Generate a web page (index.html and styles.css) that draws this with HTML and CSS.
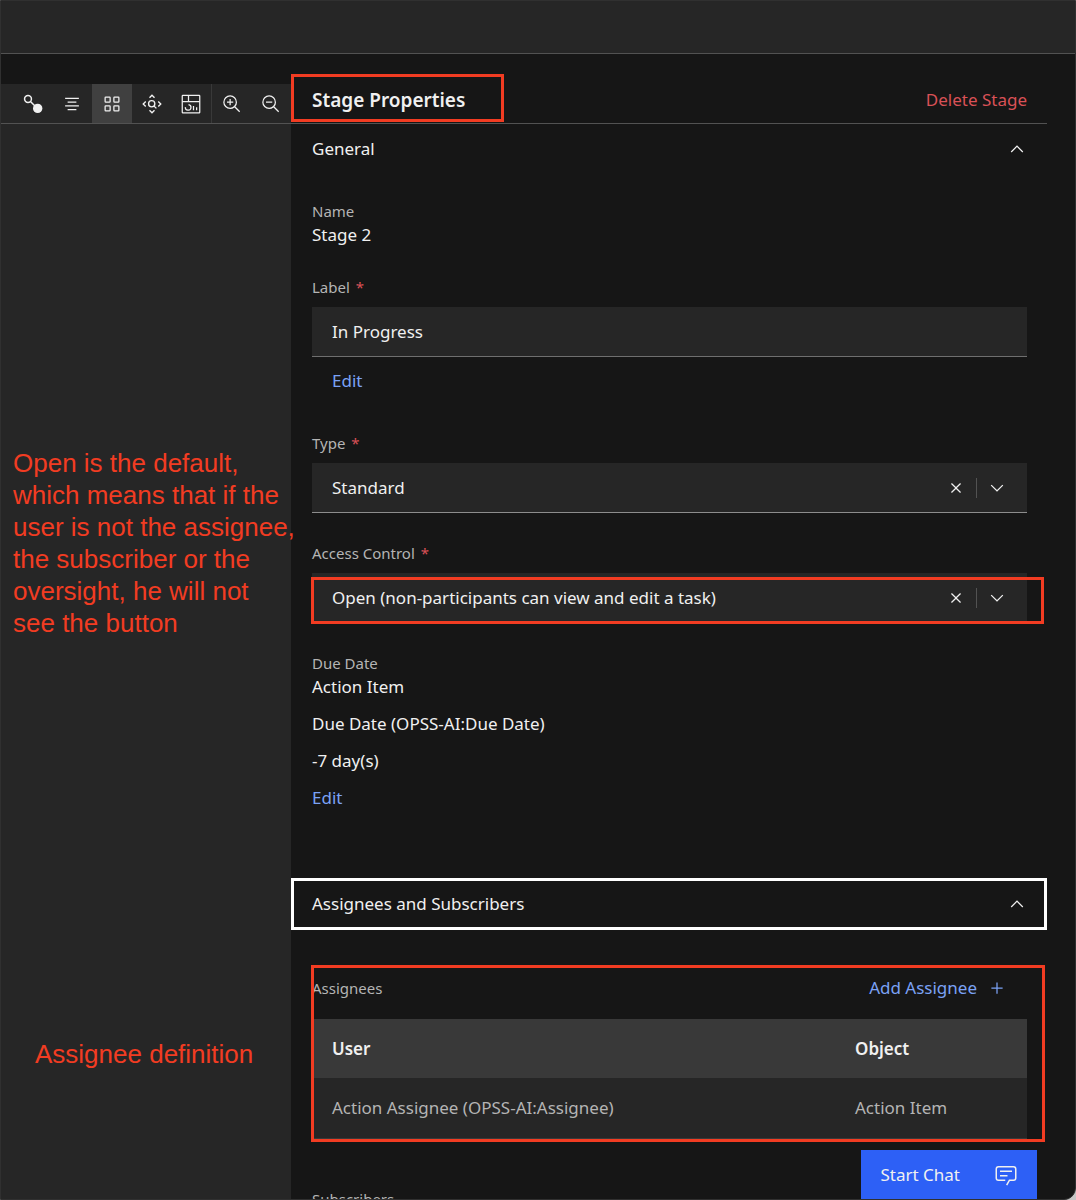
FILE: index.html
```
<!DOCTYPE html>
<html lang="en">
<head>
    <meta charset="UTF-8">
    <meta name="viewport" content="width=device-width, initial-scale=1.0">
    <title>Stage Properties</title>
    <link rel="stylesheet" href="styles.css">
</head>
<body>
    <div class="app">
        <header class="top-bar"></header>
        <div class="content">
            <aside class="canvas">
                <div class="toolbar">
                    <button type="button" class="tool" aria-label="Connect">
                        <svg class="icon" viewBox="0 0 32 32"><circle cx="8" cy="8" r="5.500" fill="none" stroke="currentColor" stroke-width="2.400"/><path d="M12 12l8 8" stroke="currentColor" stroke-width="2.400"/><circle cx="23.500" cy="23" r="7.500"/></svg>
                    </button>
                    <button type="button" class="tool" aria-label="Align">
                        <svg class="icon" viewBox="0 0 32 32"><path d="M5 6h22v2H5zM9 12h14v2H9zM5 18h22v2H5zM9 24h14v2H9z"/></svg>
                    </button>
                    <button type="button" class="tool active" aria-label="Grid">
                        <svg class="icon" viewBox="0 0 32 32"><path d="M12 4H6a2 2 0 0 0-2 2v6a2 2 0 0 0 2 2h6a2 2 0 0 0 2-2V6a2 2 0 0 0-2-2zm0 8H6V6h6zM26 4h-6a2 2 0 0 0-2 2v6a2 2 0 0 0 2 2h6a2 2 0 0 0 2-2V6a2 2 0 0 0-2-2zm0 8h-6V6h6zM12 18H6a2 2 0 0 0-2 2v6a2 2 0 0 0 2 2h6a2 2 0 0 0 2-2v-6a2 2 0 0 0-2-2zm0 8H6v-6h6zM26 18h-6a2 2 0 0 0-2 2v6a2 2 0 0 0 2 2h6a2 2 0 0 0 2-2v-6a2 2 0 0 0-2-2zm0 8h-6v-6h6z"/></svg>
                    </button>
                    <button type="button" class="tool" aria-label="Fit to screen">
                        <svg class="icon" viewBox="0 0 32 32"><g fill="none" stroke="currentColor" stroke-width="2.200"><path d="M12 6l4-4 4 4M12 26l4 4 4-4M6 12l-4 4 4 4M26 12l4 4-4 4"/><circle cx="15.500" cy="15.500" r="5"/><path d="M19 19l4 4"/></g></svg>
                    </button>
                    <button type="button" class="tool" aria-label="Dashboard">
                        <svg class="icon" viewBox="0 0 32 32"><g fill="none" stroke="currentColor" stroke-width="2"><rect x="2" y="2" width="28" height="28" rx="1"/><path d="M2 12h28M12 2v10M20 19v7M25 21v5M7 21a4.500 4.500 0 1 0 5-4"/></g></svg>
                    </button>
                    <span class="tool-divider"></span>
                    <button type="button" class="tool" aria-label="Zoom in">
                        <svg class="icon" viewBox="0 0 32 32"><path d="M18 12h-4V8h-2v4H8v2h4v4h2v-4h4z"/><path d="M21.448 20A10.856 10.856 0 0 0 24 13a11 11 0 1 0-11 11 10.856 10.856 0 0 0 7-2.552L27.586 29 29 27.586zM13 22a9 9 0 1 1 9-9 9.010 9.010 0 0 1-9 9z"/></svg>
                    </button>
                    <button type="button" class="tool" aria-label="Zoom out">
                        <svg class="icon" viewBox="0 0 32 32"><path d="M8 12h10v2H8z"/><path d="M21.448 20A10.856 10.856 0 0 0 24 13a11 11 0 1 0-11 11 10.856 10.856 0 0 0 7-2.552L27.586 29 29 27.586zM13 22a9 9 0 1 1 9-9 9.010 9.010 0 0 1-9 9z"/></svg>
                    </button>
                </div>
                <p class="note note-access">Open is the default,<br>which means that if the<br>user is not the assignee,<br>the subscriber or the<br>oversight, he will not<br>see the button</p>
                <p class="note note-assignee">Assignee definition</p>
            </aside>

            <main class="panel">
                <div class="panel-header">
                    <h1 class="panel-title">Stage Properties</h1>
                    <button type="button" class="link danger">Delete Stage</button>
                    <span class="mark mark-title"></span>
                </div>

                <button type="button" class="accordion" aria-expanded="true">
                    <span>General</span>
                    <svg class="icon" viewBox="0 0 16 16"><path d="M8 5l5 5-.7.7L8 6.400 3.700 10.700 3 10z"/></svg>
                </button>

                <div class="section">
                    <div class="field">
                        <div class="label">Name</div>
                        <div class="value">Stage 2</div>
                    </div>

                    <div class="field field-label">
                        <label class="label" for="stage-label">Label <span class="required">*</span></label>
                        <input class="input" id="stage-label" type="text" value="In Progress">
                        <a class="link indent" href="#">Edit</a>
                    </div>

                    <div class="field">
                        <label class="label" for="stage-type">Type <span class="required">*</span></label>
                        <div class="select">
                            <select id="stage-type">
                                <option>Standard</option>
                            </select>
                            <button type="button" class="clear" aria-label="Clear type">
                                <svg class="icon" viewBox="0 0 32 32"><path d="M17.414 16L24 9.414 22.586 8 16 14.586 9.414 8 8 9.414 14.586 16 8 22.586 9.414 24 16 17.414 22.586 24 24 22.586z"/></svg>
                            </button>
                            <svg class="icon arrow" viewBox="0 0 16 16"><path d="M8 11L3 6l.7-.7L8 9.600l4.300-4.300.7.7z"/></svg>
                        </div>
                    </div>

                    <div class="field">
                        <label class="label" for="stage-access">Access Control <span class="required">*</span></label>
                        <div class="select">
                            <select id="stage-access">
                                <option>Open (non-participants can view and edit a task)</option>
                            </select>
                            <button type="button" class="clear" aria-label="Clear access control">
                                <svg class="icon" viewBox="0 0 32 32"><path d="M17.414 16L24 9.414 22.586 8 16 14.586 9.414 8 8 9.414 14.586 16 8 22.586 9.414 24 16 17.414 22.586 24 24 22.586z"/></svg>
                            </button>
                            <svg class="icon arrow" viewBox="0 0 16 16"><path d="M8 11L3 6l.7-.7L8 9.600l4.300-4.300.7.7z"/></svg>
                            <span class="mark mark-select"></span>
                        </div>
                    </div>

                    <div class="field due-date">
                        <div class="label">Due Date</div>
                        <div class="value">Action Item</div>
                        <div class="value">Due Date (OPSS-AI:Due Date)</div>
                        <div class="value">-7 day(s)</div>
                        <a class="link" href="#">Edit</a>
                    </div>
                </div>

                <button type="button" class="accordion focused" aria-expanded="true">
                    <span>Assignees and Subscribers</span>
                    <svg class="icon" viewBox="0 0 16 16"><path d="M8 5l5 5-.7.7L8 6.400 3.700 10.700 3 10z"/></svg>
                </button>

                <div class="assignees">
                    <div class="table-bar">
                        <div class="label">Assignees</div>
                        <button type="button" class="link add">
                            <span>Add Assignee</span>
                            <svg class="icon" viewBox="0 0 32 32"><path d="M17 15V7h-2v8H7v2h8v8h2v-8h8v-2z"/></svg>
                        </button>
                    </div>
                    <table class="table">
                        <thead>
                            <tr><th>User</th><th class="col-object">Object</th></tr>
                        </thead>
                        <tbody>
                            <tr><td>Action Assignee (OPSS-AI:Assignee)</td><td>Action Item</td></tr>
                        </tbody>
                    </table>
                    <span class="mark mark-table"></span>
                </div>

                <div class="label subscribers">Subscribers</div>
            </main>
        </div>

        <button type="button" class="chat">
            <span>Start Chat</span>
            <svg class="icon" viewBox="0 0 32 32"><path d="M17.740 30L16 29l4-7h6a2 2 0 0 0 2-2V8a2 2 0 0 0-2-2H6a2 2 0 0 0-2 2v12a2 2 0 0 0 2 2h9v2H6a4 4 0 0 1-4-4V8a4 4 0 0 1 4-4h20a4 4 0 0 1 4 4v12a4 4 0 0 1-4 4h-4.840zM8 10h16v2H8zM8 16h10v2H8z"/></svg>
        </button>
    </div>
</body>
</html>
```
FILE: styles.css
```
:root {
    --bg: #161616;
    --layer: #262626;
    --layer-light: #393939;
    --line: #525252;
    --text: #f0f0f0;
    --text-muted: #b4b4b4;
    --link: #7ba2f5;
    --danger: #da5156;
    --mark: #f23c22;
}
* {
    box-sizing: border-box;
}
html {
    background-color: #c6c6c6;
}
body {
    margin: 0;
    font-family: 'Noto Sans', sans-serif;
    font-size: 17px;
    line-height: 24px;
    color: var(--text);
}
h1, p {
    margin: 0;
}
button, input, select {
    font: inherit;
    color: inherit;
    background: none;
    border: none;
    border-radius: 0;
    padding: 0;
    margin: 0;
}
button {
    cursor: pointer;
}

.app {
    display: flex;
    flex-direction: column;
    height: 100vh;
    overflow: hidden;
    position: relative;
    background-color: var(--bg);
    border: 1px solid #303030;
    border-radius: 0 0 12px 0;
}
.icon {
    display: block;
    flex: none;
    width: 20px;
    height: 20px;
    fill: currentColor;
}
.top-bar {
    flex: none;
    height: 53px;
    background-color: var(--layer);
    border-bottom: 1px solid var(--line);
}
.content {
    flex: 1;
    display: flex;
    min-height: 0;
}

/* left side */
.canvas {
    flex: none;
    width: 290px;
    margin-top: 30px;
    background-color: var(--layer);
}
.toolbar {
    display: flex;
    height: 40px;
    padding-left: 12px;
    border-bottom: 1px solid var(--line);
}
.tool {
    flex: 1;
    display: flex;
    align-items: center;
    justify-content: center;
}
.tool.active {
    background-color: #404040;
}
.tool-divider {
    width: 1px;
    background-color: var(--layer-light);
}
.note {
    position: relative;
    font-family: 'Liberation Sans', Arial, sans-serif;
    font-size: 26px;
    line-height: 32px;
    color: var(--mark);
    white-space: nowrap;
}
.note-access {
    margin: 323px 0 0 12px;
}
.note-assignee {
    margin: 399px 0 0 34px;
}

/* properties panel */
.panel {
    flex: 1;
    min-width: 0;
    padding-right: 28px;
}
.panel-header {
    position: relative;
    display: flex;
    align-items: center;
    justify-content: space-between;
    height: 70px;
    padding: 22px 20px 0 21px;
    border-bottom: 1px solid var(--line);
}
.panel-title {
    font-size: 19px;
    font-weight: 600;
}
.link {
    color: var(--link);
    text-decoration: none;
}
.link.danger {
    color: var(--danger);
}
.accordion {
    display: flex;
    align-items: center;
    justify-content: space-between;
    width: 100%;
    height: 50px;
    padding: 0 20px 0 21px;
}
.accordion.focused {
    height: 52px;
    outline: 3px solid #fff;
    outline-offset: -3px;
}
.section {
    padding: 25px 20px 68px 21px;
}
.field {
    margin-bottom: 28px;
}
.field-label {
    margin-bottom: 38px;
}
.label {
    display: block;
    font-size: 15px;
    line-height: 24px;
    color: var(--text-muted);
}
.required {
    margin-left: 2px;
    color: var(--danger);
}
.input {
    display: block;
    width: 100%;
    height: 50px;
    margin: 8px 0 12px;
    padding: 0 20px;
    background-color: var(--layer);
    border-bottom: 1px solid #6f6f6f;
}
.indent {
    margin-left: 20px;
}
.select {
    position: relative;
    display: flex;
    align-items: center;
    height: 50px;
    margin-top: 8px;
    padding-right: 20px;
    background-color: var(--layer);
    border-bottom: 1px solid #8d8d8d;
}
.select select {
    flex: 1;
    min-width: 0;
    height: 100%;
    padding-left: 20px;
    appearance: none;
}
.clear {
    padding-right: 10px;
    border-right: 1px solid var(--line);
}
.arrow {
    margin-left: 10px;
}
.due-date {
    display: flex;
    flex-direction: column;
    align-items: flex-start;
    margin-bottom: 0;
}
.due-date .value + .value,
.due-date .link {
    margin-top: 13px;
}

/* assignees */
.assignees {
    position: relative;
    padding: 46px 20px 48px 21px;
}
.table-bar {
    display: flex;
    align-items: center;
    justify-content: space-between;
    padding-right: 20px;
    margin-bottom: 19px;
}
.add {
    display: flex;
    align-items: center;
    gap: 10px;
}
.table {
    width: 100%;
    table-layout: fixed;
    border-collapse: collapse;
    text-align: left;
}
.table th,
.table td {
    height: 60px;
    padding: 0 20px;
}
.table th {
    height: 59px;
    font-weight: 600;
    background-color: var(--layer-light);
}
.table td {
    color: var(--text-muted);
    background-color: var(--layer);
    border-bottom: 1px solid var(--layer-light);
}
.col-object {
    width: 192px;
}
.subscribers {
    padding-left: 21px;
}

/* red frames drawn over the panel */
.mark {
    position: absolute;
    border: 3px solid var(--mark);
    pointer-events: none;
}
.mark-title {
    left: 0;
    top: 20px;
    width: 213px;
    height: 48px;
}
.mark-select {
    left: -1px;
    right: -17px;
    top: 4px;
    bottom: -2px;
}
.mark-table {
    left: 20px;
    right: 2px;
    top: 35px;
    bottom: 45px;
}

.chat {
    position: absolute;
    right: 38px;
    bottom: 0;
    display: flex;
    align-items: center;
    gap: 34px;
    height: 49px;
    padding: 0 19px;
    background-color: #2d60f6;
}
.chat .icon {
    width: 24px;
    height: 24px;
}
```
